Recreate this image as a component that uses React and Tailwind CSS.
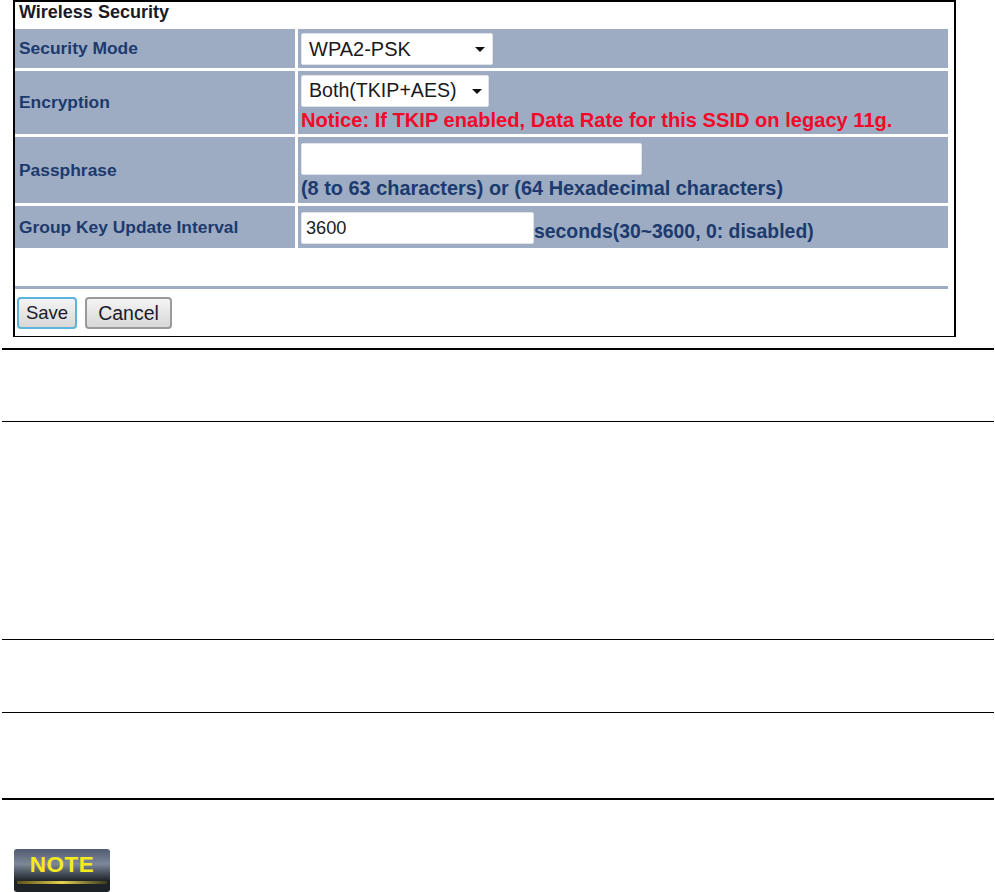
function Arrow() {
  return (
    <svg width="10" height="5" viewBox="0 0 10 5" className="shrink-0">
      <path d="M0 0h10L5 5z" fill="#111" />
    </svg>
  )
}

function Row({ label, h, children }) {
  return (
    <div className={`grid grid-cols-[280px_650px] gap-x-[3px] ${h}`}>
      <div className="bg-[#9dacc3] pl-[4px] flex items-center text-[17.4px] font-bold text-[#1c3a6e] whitespace-nowrap">{label}</div>
      <div className="bg-[#9dacc3] pl-[3px] whitespace-nowrap">{children}</div>
    </div>
  )
}

export default function App() {
  return (
    <div className="w-[995px] h-[892px] bg-white overflow-hidden font-['Liberation_Sans',Arial,sans-serif]">
      {/* screenshot frame */}
      <div className="ml-[13px] w-[943px] h-[337px] border-x-2 border-t-2 border-b border-black flex flex-col">
        <div className="h-[27px] pl-[4px] pb-[6px] flex items-center text-[18px] font-bold text-[#1a1a2a]">Wireless Security</div>
        <div className="flex flex-col gap-y-[3px]">
          <Row label="Security Mode" h="h-[39px]">
            <div className="mt-[4px] w-[192px] h-[32px] bg-white border border-[#dfe3ea] rounded-[2px] flex items-center justify-between pl-[7px] pr-[7px] text-[20px] text-[#1a1a1a]">
              WPA2-PSK
              <Arrow />
            </div>
          </Row>
          <Row label="Encryption" h="h-[63px]">
            <div className="mt-[4px] w-[188px] h-[32px] bg-white border border-[#dfe3ea] rounded-[2px] flex items-center justify-between pl-[7px] pr-[6px] text-[19.6px] text-[#1a1a1a]">
              Both(TKIP+AES)
              <Arrow />
            </div>
            <div className="mt-[3px] text-[20.1px] leading-[20px] font-bold text-[#f2092a]">
              Notice: If TKIP enabled, Data Rate for this SSID on legacy 11g.
            </div>
          </Row>
          <Row label="Passphrase" h="h-[66px]">
            <div className="mt-[6px] w-[341px] h-[32px] bg-white border border-[#dfe3ea] rounded-[2px]" />
            <div className="mt-[3px] text-[19.9px] leading-[20px] font-bold text-[#1c3a6e]">
              (8 to 63 characters) or (64 Hexadecimal characters)
            </div>
          </Row>
          <Row label="Group Key Update Interval" h="h-[42px]">
            <div className="flex items-start">
              <div className="mt-[6px] w-[233px] h-[32px] bg-white border border-[#dfe3ea] rounded-[2px] flex items-center pl-[4px] pt-[2px] text-[18.2px] text-[#1a1a1a]">3600</div>
              <div className="mt-[15px] text-[19.4px] leading-[20px] font-bold text-[#1c3a6e]">seconds(30~3600, 0: disabled)</div>
            </div>
          </Row>
        </div>
        <div className="mt-[38px] w-[933px] h-[3px] bg-[#9dacc3]" />
        <div className="mt-[8px] pl-[2px] flex gap-x-[8px] text-[18.5px] text-[#1a1a2a]">
          <button className="w-[60px] h-[32px] rounded-[4px] border-2 border-[#5bb4dc] bg-gradient-to-b from-[#f4f4f4] to-[#d8d8d8]">Save</button>
          <button className="w-[87px] h-[32px] rounded-[4px] border-2 border-[#9a9a9a] bg-gradient-to-b from-[#f4f4f4] to-[#d8d8d8] text-[19.5px]">Cancel</button>
        </div>
      </div>

      {/* document table rules */}
      <div className="ml-[2px] mt-[11px] w-[992px]">
        <div className="h-[2px] bg-black" />
        <div className="h-[71px]" />
        <div className="h-px bg-black" />
        <div className="h-[217px]" />
        <div className="h-px bg-black" />
        <div className="h-[72px]" />
        <div className="h-px bg-black" />
        <div className="h-[85px]" />
        <div className="h-[2px] bg-black" />
      </div>

      {/* note badge */}
      <div className="ml-[14px] mt-[49px] w-[96px] h-[43px] rounded-[3px] relative overflow-hidden bg-gradient-to-b from-[#525c70] via-[#7d889c] via-35% to-[#1d2226] to-75% flex justify-center">
        <span className="mt-[3px] text-[22.5px] leading-[26px] font-bold tracking-[0.5px] text-[#f5ea1e]">NOTE</span>
        <div className="absolute left-[3px] right-[3px] top-[32px] h-[3px] bg-gradient-to-r from-[#5c5218] via-[#e8d24e] to-[#3a3a20]" />
      </div>
    </div>
  )
}
